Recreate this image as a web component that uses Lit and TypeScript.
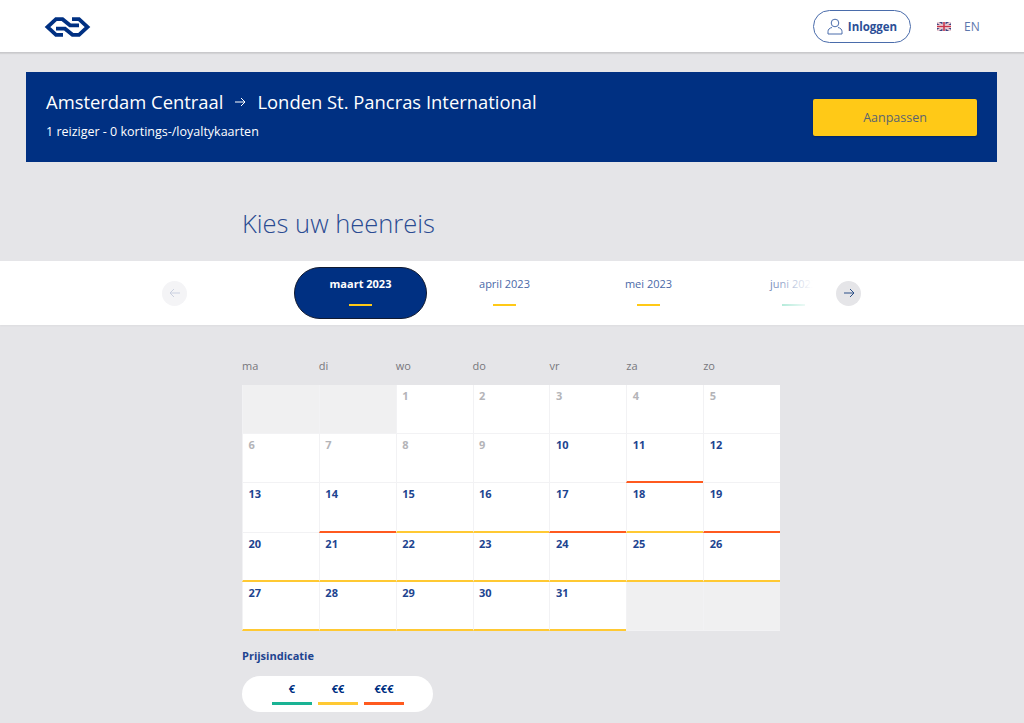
import { LitElement, html, css } from 'lit';
import { customElement } from 'lit/decorators.js';

type Price = '' | 'mid' | 'high';
interface Cell { day?: number; off?: boolean; price?: Price }

const orange: number[] = [11, 14, 17, 19];
const yellow: number[] = [15, 16, 18, 20, 21, 22, 23, 24, 25, 26, 27, 28, 29, 30, 31];

function buildCells(): Cell[] {
  const cells: Cell[] = [{}, {}];
  for (let d = 1; d <= 31; d++) {
    let price: Price = '';
    if (orange.includes(d)) price = 'high';
    if (yellow.includes(d)) price = 'mid';
    cells.push({ day: d, off: d < 10, price });
  }
  cells.push({}, {});
  return cells;
}

@customElement('app-root')
export class AppRoot extends LitElement {

  static styles = css`
    :host{
      display:block;
      height:723px;
      overflow:hidden;
      background:#e5e5e8;
      font-family:"Open Sans","Noto Sans",sans-serif;
      color:#003082;
    }
    .top{
      height:52px;
      background:#fff;
      border-bottom:1px solid #c9c9cc;
      box-shadow:0 1px 1px rgba(0,0,0,.08);
      display:flex;
      align-items:center;
      padding:0 44px;
    }
    .logo{
      width:47px;
      height:20px;
      margin-top:1px;
    }
    .login{
      margin-left:auto;
      width:98px;
      height:33px;
      box-sizing:border-box;
      border:1px solid #4a6cab;
      border-radius:17px;
      display:flex;
      align-items:center;
      justify-content:center;
      gap:5px;
      font-size:11.5px;
      font-weight:700;
      color:#2b4f97;
    }
    .lang{
      display:flex;
      align-items:center;
      gap:13px;
      margin-left:26px;
      font-size:12px;
      color:#5d77ad;
      width:43px;
    }
    .banner{
      margin:19px 27px 0 26px;
      height:90px;
      background:#003082;
      color:#fff;
      display:flex;
      align-items:center;
      justify-content:space-between;
      padding:0 20px;
    }
    .trip{
      padding-bottom:4px;
    }
    .route{
      display:flex;
      align-items:center;
      font-size:18.4px;
      line-height:26px;
    }
    .route svg{
      margin:0 10px 0 11px;
    }
    .sub{
      font-size:12.5px;
      line-height:18px;
      margin-top:7.5px;
    }
    .change{
      width:164px;
      height:37px;
      background:#ffc917;
      border-radius:2px;
      box-shadow:0 1px 2px rgba(0,0,0,.25);
      color:#5a6470;
      font-size:12.5px;
      display:flex;
      align-items:center;
      justify-content:center;
    }
    h1{
      margin:43px 0 0 242px;
      height:56px;
      font-size:25.5px;
      line-height:36px;
      font-weight:300;
      color:#2a4b92;
    }
    .months{
      height:64px;
      background:#fff;
      display:flex;
      align-items:center;
      padding-left:162px;
      box-shadow:0 1px 2px rgba(0,0,0,.04);
    }
    .nav{
      flex:none;
      width:25px;
      height:25px;
      border-radius:50%;
      display:flex;
      align-items:center;
      justify-content:center;
      background:#e5e5e8;
    }
    .nav.prev{
      background:#f3f3f6;
      opacity:.9;
    }
    .track{
      width:649px;
      display:flex;
      align-items:center;
      position:relative;
      overflow:hidden;
      height:64px;
      padding-left:107px;
      box-sizing:border-box;
    }
    .month{
      flex:none;
      width:133px;
      height:52px;
      margin-right:11px;
      box-sizing:border-box;
      display:flex;
      flex-direction:column;
      align-items:center;
      font-size:11px;
      line-height:16px;
      color:#4a69a8;
      padding-top:9px;
    }
    .month i{
      width:23px;
      height:2px;
      margin-top:12px;
      background:#ffc917;
    }
    .month.active{
      background:#003082;
      border:1px solid #111a30;
      border-radius:26px;
      color:#fff;
      font-weight:700;
      padding-top:8px;
    }
    .month.last{
      width:auto;
      margin-left:44px;
    }
    .month.last i{
      background:#7fdcc0;
      width:23px;
    }
    .fade{
      position:absolute;
      right:0;
      top:0;
      bottom:0;
      width:66px;
      background:linear-gradient(90deg,rgba(255,255,255,.2),#fff 65%);
    }
    .cal{
      width:538px;
      margin:31px 0 0 242px;
    }
    .weekdays{
      display:grid;
      grid-template-columns:repeat(7,1fr);
      height:29px;
      font-size:11px;
      line-height:20px;
      color:#77777c;
    }
    .grid{
      display:grid;
      grid-template-columns:repeat(7,1fr);
      grid-auto-rows:49.2px;
    }
    .cell{
      background:#fff;
      box-sizing:border-box;
      border-left:1px solid #f2f2f4;
      border-bottom:1px solid #f2f2f4;
      padding:3px 0 0 5.5px;
      font-size:11px;
      line-height:16px;
      font-weight:700;
      color:#1d4490;
    }
    .cell.off{
      color:#b4b4b8;
    }
    .cell.empty{
      background:#f0f0f1;
    }
    .cell.mid{
      border-bottom:2px solid #ffc933;
    }
    .cell.high{
      border-bottom:2px solid #ff5a1f;
    }
    .legend-title{
      margin-top:17px;
      font-size:11px;
      line-height:16px;
      font-weight:700;
      color:#1d4490;
    }
    .legend{
      width:191px;
      height:36px;
      margin-top:12px;
      border-radius:18px;
      background:#fff;
      display:flex;
      justify-content:center;
      gap:6px;
      padding-left:1px;
      box-sizing:border-box;
    }
    .legend div{
      width:40px;
      display:flex;
      flex-direction:column;
      align-items:center;
      font-size:11px;
      line-height:14px;
      font-weight:700;
      padding-top:6px;
      box-sizing:border-box;
    }
    .legend i{
      width:40px;
      height:3px;
      margin-top:6px;
    }
  `;

  render() {
    const days = ['ma', 'di', 'wo', 'do', 'vr', 'za', 'zo'];
    return html`
      <header class="top">
        <svg class="logo" viewBox="0 0 47 20" fill="none" stroke="#003082" stroke-width="3.800" stroke-miterlimit="6">
          <path d="M19 17.800H12L3.500 10 12 2.200h6.500L26 8.300h9"/>
          <path d="M28 2.200h7L43.500 10 35 17.800h-6.500L21 11.700h-9"/>
        </svg>
        <div class="login">
          <svg width="16" height="17" viewBox="0 0 16 17" fill="none" stroke="#4a6cab" stroke-width="1">
            <circle cx="8" cy="5" r="3.800"/>
            <path d="M1 16v-2.500c0-2 1.500-3.500 4-4M15 16v-2.500c0-2-1.500-3.500-4-4M1 16h14"/>
          </svg>
          Inloggen
        </div>
        <div class="lang">
          <svg width="14" height="9" viewBox="0 0 14 9">
            <rect width="14" height="9" fill="#39407f"/>
            <path d="M0 0l14 9M14 0L0 9" stroke="#e8c9d0" stroke-width="2"/>
            <path d="M7 0v9M0 4.500h14" stroke="#f2e6ea" stroke-width="3"/>
            <path d="M7 0v9M0 4.500h14" stroke="#c8344a" stroke-width="1.600"/>
          </svg>
          EN
        </div>
      </header>

      <section class="banner">
        <div class="trip">
          <div class="route">
            Amsterdam Centraal
            <svg width="13" height="12" viewBox="0 0 13 12" fill="none" stroke="#fff" stroke-width="1">
              <path d="M1 6h10M7 2l4 4-4 4"/>
            </svg>
            Londen St. Pancras International
          </div>
          <div class="sub">1 reiziger - 0 kortings-/loyaltykaarten</div>
        </div>
        <div class="change">Aanpassen</div>
      </section>

      <h1>Kies uw heenreis</h1>

      <section class="months">
        <div class="nav prev">
          <svg width="12" height="12" viewBox="0 0 12 12" fill="none" stroke="#c5cbdc" stroke-width="1">
            <path d="M11 6H1M5 2L1 6l4 4"/>
          </svg>
        </div>
        <div class="track">
          <div class="month active">maart 2023<i></i></div>
          <div class="month">april 2023<i></i></div>
          <div class="month">mei 2023<i></i></div>
          <div class="month last">juni 2023<i></i></div>
          <div class="fade"></div>
        </div>
        <div class="nav">
          <svg width="12" height="12" viewBox="0 0 12 12" fill="none" stroke="#2b4f87" stroke-width="1">
            <path d="M1 6h10M7 2l4 4-4 4"/>
          </svg>
        </div>
      </section>

      <section class="cal">
        <div class="weekdays">${days.map(d => html`<span>${d}</span>`)}</div>
        <div class="grid">
          ${buildCells().map(c => {
            const cls = c.day === undefined ? 'empty' : `${c.off ? 'off' : ''} ${c.price ?? ''}`;
            return html`<div class="cell ${cls}">${c.day ?? ''}</div>`;
          })}
        </div>
        <div class="legend-title">Prijsindicatie</div>
        <div class="legend">
          <div>€<i style="background:#1ab394"></i></div>
          <div>€€<i style="background:#ffc933"></i></div>
          <div>€€€<i style="background:#ff5a1f"></i></div>
        </div>
      </section>
    `;
  }
}
